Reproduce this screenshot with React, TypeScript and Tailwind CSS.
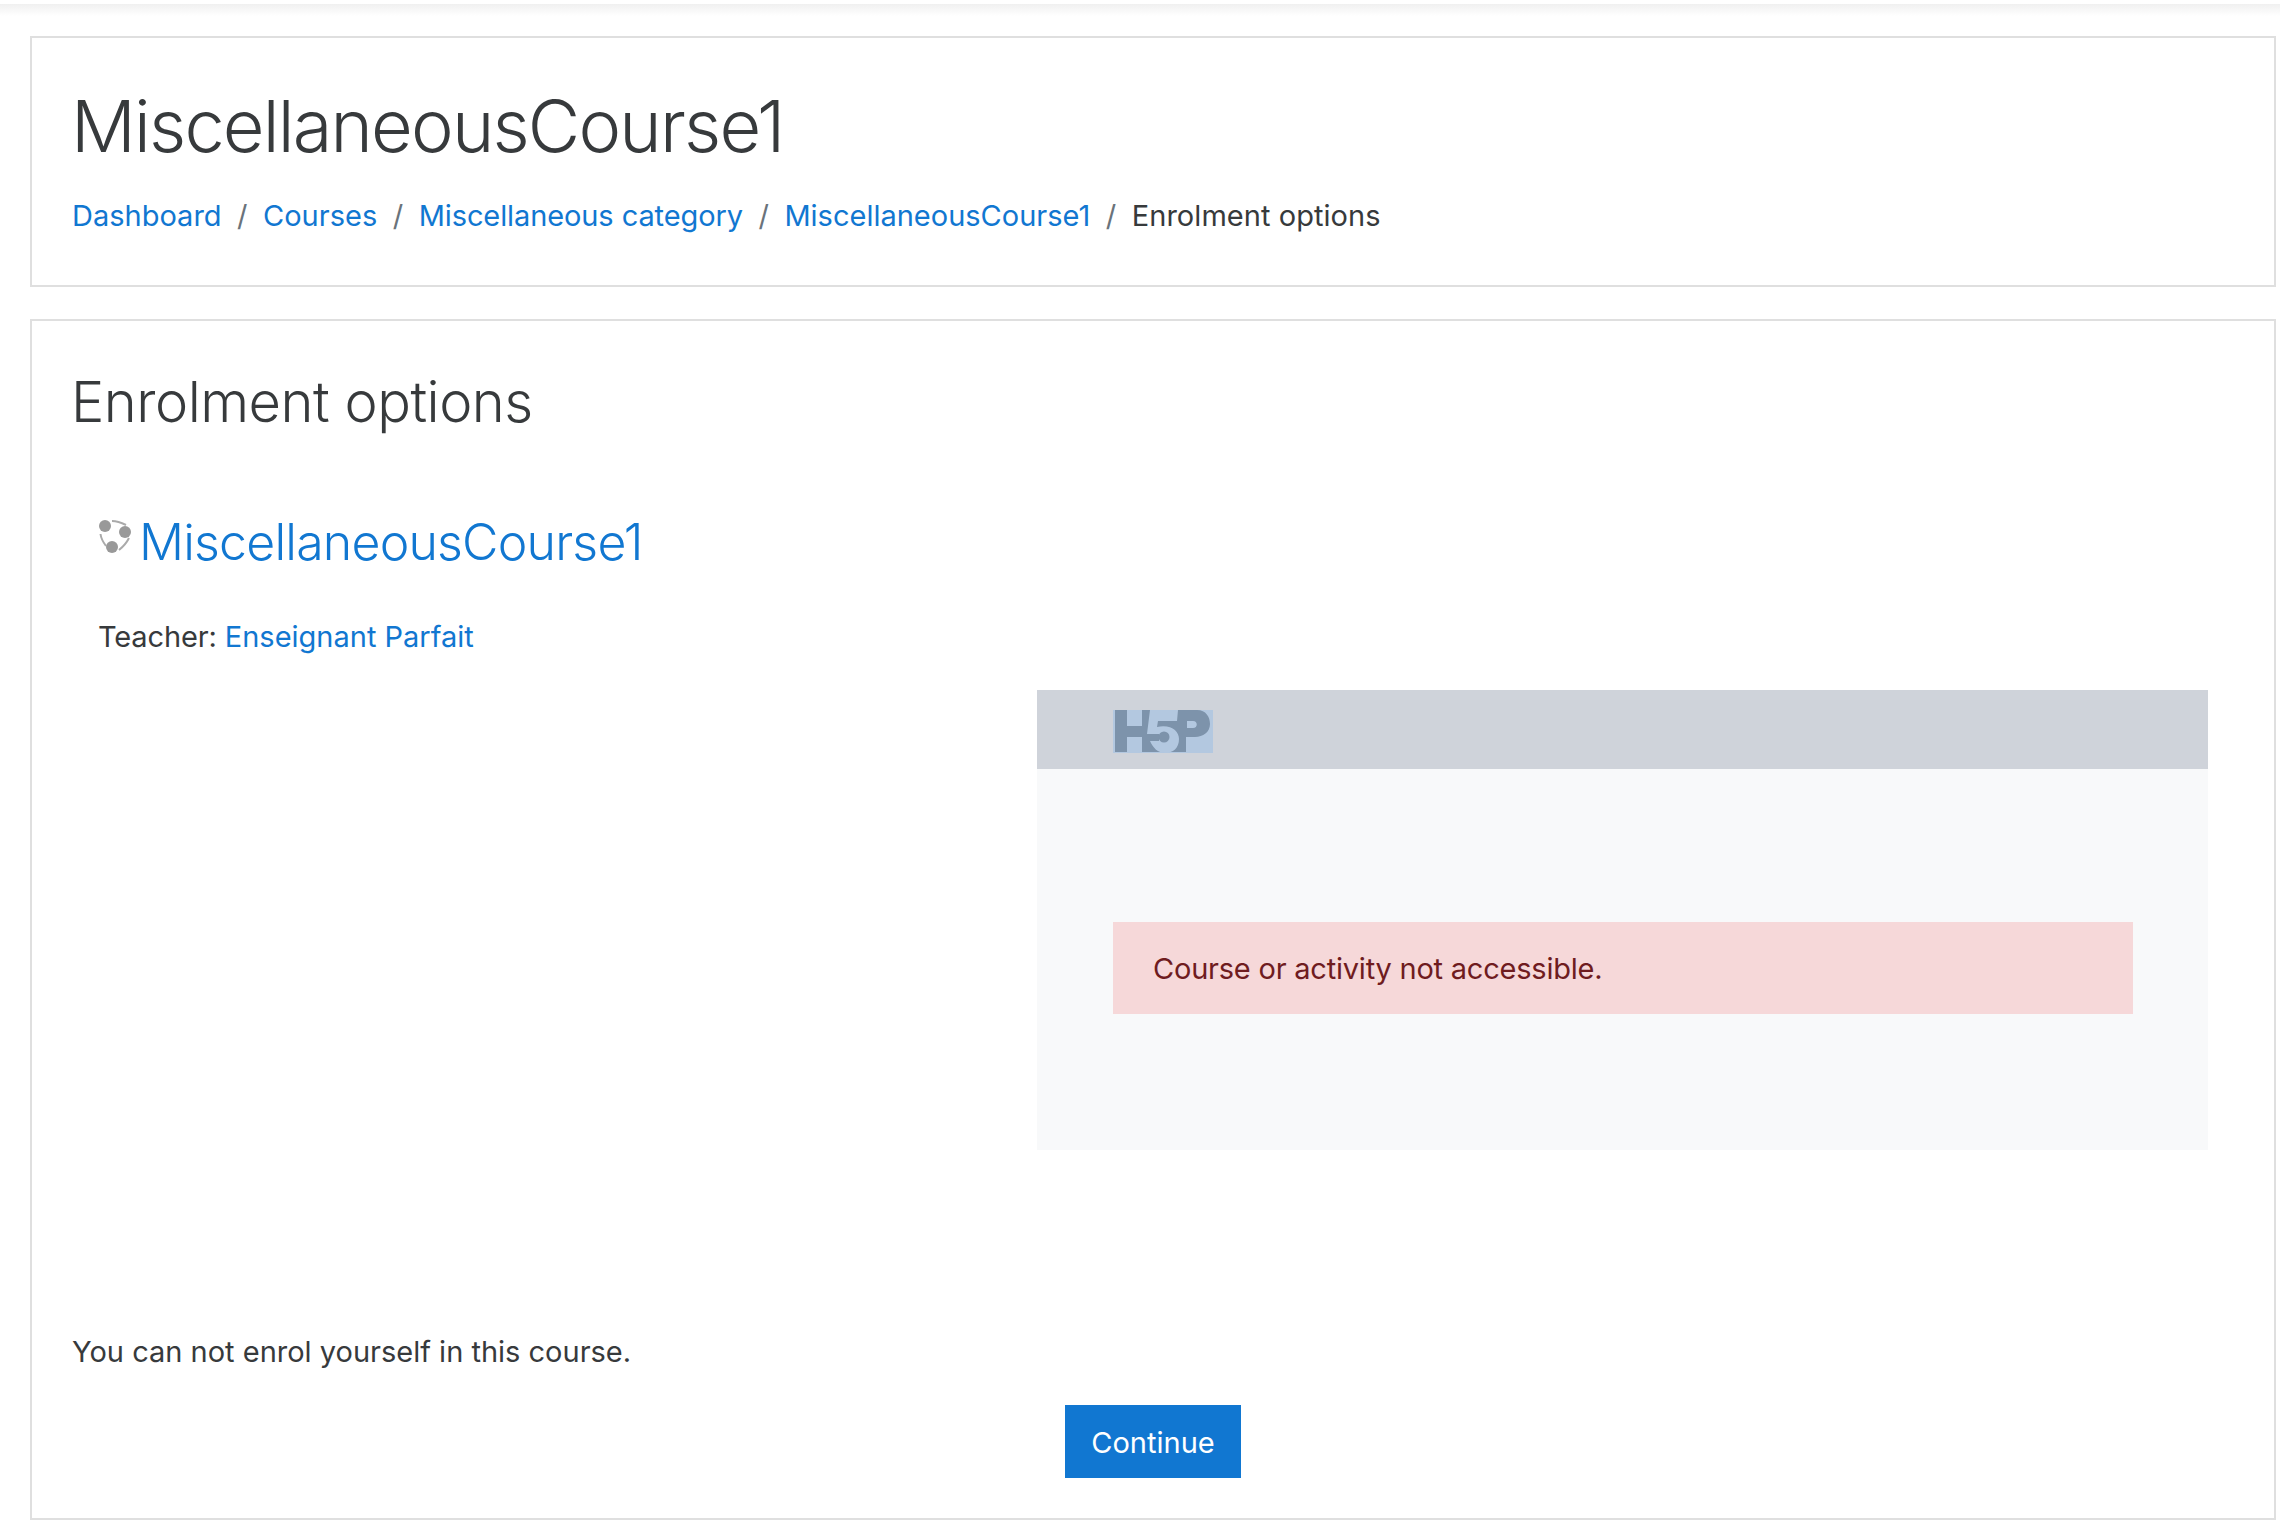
const font = { fontFamily: "Inter, 'Noto Sans', sans-serif" };

function CourseIcon() {
  return (
    <svg width="34" height="36" viewBox="0 0 34 36" className="shrink-0">
      <path d="M14 3 C19 3 24 5 28 7 M31 20 C29 24 26 28 21 32 M8 28 C5 24 3 20 2.5 16" fill="none" stroke="#aaa" strokeWidth="2" />
      <circle cx="7" cy="8" r="6" fill="#999" />
      <circle cx="27" cy="14" r="6" fill="#999" />
      <circle cx="14" cy="29" r="6" fill="#999" />
    </svg>
  );
}

function H5pLogo() {
  return (
    <svg width="100" height="43" viewBox="0 0 100 43" className="block">
      <rect width="100" height="43" fill="#b3c8e0" />
      <path d="M2 0 H14 V16 H29 V0 H46 V42 H29 V27 H14 V42 H2 Z" fill="#7d93ab" />
      <path d="M44 0 H84 C93 0 97 7 97 14 C97 22 90 27 82 27 H73 V42 H44 Z M74 11 V18 H80 C85 18 85 11 80 11 Z" fill="#7d93ab" fillRule="evenodd" />
      <path d="M37 0 H65 L64 11 H45 L44 17 C58 14 66 21 66 29 C66 38 60 43 52 43 C45 43 40 38 37 31 H46 V24 H34 Z" fill="#b3c8e0" />
      <circle cx="51" cy="27" r="5.5" fill="#7d93ab" />
    </svg>
  );
}

export default function App() {
  return (
    <div className="min-h-[1538px] bg-white pt-1 text-[#373a3c]" style={font}>
      <div className="h-3 bg-gradient-to-b from-[#f0f0f0] to-white" />
      <div className="ml-[30px] mr-[4px] mt-5 h-[251px] border-2 border-[#dfdfdf] px-[40px] pt-[40px]">
        <h1 className="-ml-[1px] text-[72px] font-light leading-[96px] tracking-[-1.8px]">MiscellaneousCourse1</h1>
        <nav className="mt-[20px] flex items-center text-[29px] leading-[44px]">
          <a className="text-[#1177d1]">Dashboard</a>
          <span className="mx-[15.5px] text-[#6a737b]">/</span>
          <a className="text-[#1177d1]">Courses</a>
          <span className="mx-[15.5px] text-[#6a737b]">/</span>
          <a className="tracking-[-0.1px] text-[#1177d1]">Miscellaneous category</a>
          <span className="mx-[15.5px] text-[#6a737b]">/</span>
          <a className="text-[#1177d1]">MiscellaneousCourse1</a>
          <span className="mx-[15.5px] text-[#6a737b]">/</span>
          <span className="tracking-[0.05px]">Enrolment options</span>
        </nav>
      </div>
      <div className="ml-[30px] mr-[4px] mt-[32px] h-[1201px] border-2 border-[#dfdfdf] px-[40px] pt-[45px]">
        <h2 className="-ml-[1px] text-[56px] font-light leading-[72px] tracking-[-0.5px]">Enrolment options</h2>
        <div className="mt-[80px] flex items-start pl-[26px]">
          <CourseIcon />
          <a className="-mt-[8px] ml-[7px] text-[50px] font-light leading-[64px] tracking-[-0.8px] text-[#1177d1]">MiscellaneousCourse1</a>
        </div>
        <p className="mt-[41px] pl-[26px] text-[29px] leading-[44px]">
          <span className="tracking-[-0.15px]">Teacher:</span> <a className="text-[#1177d1]">Enseignant Parfait</a>
        </p>
        <div className="mr-[26px] mt-[31px] flex justify-end">
          <div className="h-[460px] w-[1171px] bg-[#f8f9fa]">
            <div className="flex h-[79px] items-start bg-[#cfd3da] pl-[76px] pt-[20px]">
              <H5pLogo />
            </div>
            <div className="ml-[76px] mr-[75px] mt-[153px] flex h-[92px] items-center bg-[#f6d8d9] px-[40px] pt-[1px] text-[29px] tracking-[-0.22px] text-[#6f1c1f]">
              Course or activity not accessible.
            </div>
          </div>
        </div>
        <p className="mt-[180px] text-[29px] leading-[44px]">You can not enrol yourself in this course.</p>
        <div className="mt-[31px] flex justify-center">
          <button className="h-[73px] w-[176px] bg-[#1177d1] pt-[2px] text-[29px] text-white">Continue</button>
        </div>
      </div>
    </div>
  );
}
